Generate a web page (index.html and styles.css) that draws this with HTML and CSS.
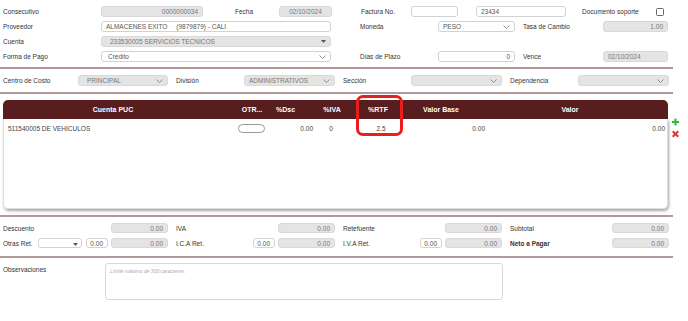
FILE: index.html
```html
<!DOCTYPE html>
<html lang="es">
<head>
  <meta charset="UTF-8" />
  <meta name="viewport" content="width=device-width, initial-scale=1" />
  <title>Factura de Compra</title>
  <link rel="stylesheet" href="styles.css">
</head>
<body>
  <div class="top">
    <div class="row">
      <span class="lbl w98">Consecutivo</span>
      <div class="field ro num w102">0000000034</div>
      <span class="lbl w44 ml32">Fecha</span>
      <div class="field ro mid w53">02/10/2024</div>
      <span class="lbl w50 ml29">Factura No.</span>
      <div class="field w47"></div>
      <div class="field w90 ml18">23434</div>
      <span class="lbl w73 ml16">Documento soporte</span>
      <span class="check"></span>
    </div>

    <div class="row">
      <span class="lbl w98">Proveedor</span>
      <div class="field w230">ALMACENES EXITO     (9879879) - CALI</div>
      <span class="lbl w78 ml29">Moneda</span>
      <div class="field sel w77">PESO<svg class="chev" viewBox="0 0 7 4"><path d="M0.5 0.5 3.5 3.5 6.5 0.5"/></svg></div>
      <span class="lbl w80 ml8">Tasa de Cambio</span>
      <div class="field ro num w65">1.00</div>
    </div>

    <div class="row">
      <span class="lbl w98">Cuenta</span>
      <div class="field ro sel pad8 w230">233530005 SERVICIOS TECNICOS<svg class="tri" viewBox="0 0 5 3"><path d="M0 0h5L2.5 3z"/></svg></div>
    </div>

    <div class="row">
      <span class="lbl w98">Forma de Pago</span>
      <div class="field sel pad6 w230">Credito<svg class="chev" viewBox="0 0 7 4"><path d="M0.5 0.5 3.5 3.5 6.5 0.5"/></svg></div>
      <span class="lbl w78 ml29">Días de Plazo</span>
      <div class="field num w77">0</div>
      <span class="lbl w80 ml8">Vence</span>
      <div class="field ro w65">02/10/2024</div>
    </div>
  </div>

  <div class="rule"></div>

  <div class="filters">
    <div class="cell">
      <span class="lbl">Centro de Costo</span>
      <div class="field ro sel pad8 w90">PRINCIPAL<svg class="chev" viewBox="0 0 7 4"><path d="M0.5 0.5 3.5 3.5 6.5 0.5"/></svg></div>
    </div>
    <div class="cell">
      <span class="lbl">División</span>
      <div class="field ro sel w91">ADMINISTRATIVOS<svg class="chev" viewBox="0 0 7 4"><path d="M0.5 0.5 3.5 3.5 6.5 0.5"/></svg></div>
    </div>
    <div class="cell">
      <span class="lbl">Sección</span>
      <div class="field ro sel w91"><span></span><svg class="chev" viewBox="0 0 7 4"><path d="M0.5 0.5 3.5 3.5 6.5 0.5"/></svg></div>
    </div>
    <div class="cell">
      <span class="lbl">Dependencia</span>
      <div class="field ro sel w91"><span></span><svg class="chev" viewBox="0 0 7 4"><path d="M0.5 0.5 3.5 3.5 6.5 0.5"/></svg></div>
    </div>
  </div>

  <div class="rule flush"></div>

  <div class="lines">
    <div class="table">
      <div class="thead">
        <div class="th c-cta">Cuenta PUC</div>
        <div class="th c-otr">OTR...</div>
        <div class="th c-dsc">%Dsc</div>
        <div class="th c-iva">%IVA</div>
        <div class="th c-rtf">%RTF</div>
        <div class="th c-base">Valor Base</div>
        <div class="th c-val">Valor</div>
      </div>
      <div class="tbody">
        <div class="tr">
          <div class="td c-cta">511540005 DE VEHICULOS</div>
          <div class="td c-otr"><span class="pill"></span></div>
          <div class="td c-dsc">0.00</div>
          <div class="td c-iva">0</div>
          <div class="td c-rtf">2.5</div>
          <div class="td c-base">0.00</div>
          <div class="td c-val">0.00</div>
        </div>
      </div>
      <!-- resaltado de la columna %RTF -->
      <div class="mark"></div>
    </div>
    <div class="tools">
      <svg class="add" viewBox="0 0 10 10"><path d="M5 0.5v9M0.5 5h9"/></svg>
      <svg class="del" viewBox="0 0 10 10"><path d="M1.5 1.5l7 7M8.5 1.5l-7 7"/></svg>
    </div>
  </div>

  <div class="rule gap"></div>

  <div class="totals">
    <div class="cell">
      <span class="lbl">Descuento</span>
      <div class="field ro num amt">0.00</div>
    </div>
    <div class="cell">
      <span class="lbl">IVA</span>
      <div class="field ro num amt">0.00</div>
    </div>
    <div class="cell">
      <span class="lbl">Retefuente</span>
      <div class="field ro num amt">0.00</div>
    </div>
    <div class="cell">
      <span class="lbl">Subtotal</span>
      <div class="field ro num amt">0.00</div>
    </div>

    <div class="cell">
      <span class="lbl">Otras Ret.</span>
      <div class="field sel pick"><span></span><svg class="tri" viewBox="0 0 5 3"><path d="M0 0h5L2.5 3z"/></svg></div>
      <div class="field num mini">0.00</div>
      <div class="field ro num amt">0.00</div>
    </div>
    <div class="cell">
      <span class="lbl">I.C.A Ret.</span>
      <div class="field num mini">0.00</div>
      <div class="field ro num amt">0.00</div>
    </div>
    <div class="cell">
      <span class="lbl">I.V.A Ret.</span>
      <div class="field num mini">0.00</div>
      <div class="field ro num amt">0.00</div>
    </div>
    <div class="cell">
      <span class="lbl strong">Neto a Pagar</span>
      <div class="field ro num amt">0.00</div>
    </div>
  </div>

  <div class="rule gap"></div>

  <div class="notes">
    <label class="lbl" for="obs">Observaciones</label>
    <textarea id="obs" placeholder="Límite máximo de 300 caracteres."></textarea>
  </div>
</body>
</html>
```

FILE: styles.css
```css
body {
  font-family: 'Liberation Sans', Arial, Helvetica, sans-serif;
  font-size: 6.5px;
  color: #333;
  background: #fff;
  margin: 0;
}

.top {
  padding: 4px 0 0 3px;
}

.row {
  display: flex;
  align-items: center;
  height: 15px;
}

.lbl {
  flex: none;
  white-space: nowrap;
}

.strong {
  font-weight: bold;
}

.field {
  flex: none;
  display: flex;
  align-items: center;
  height: 11px;
  box-sizing: border-box;
  padding: 0 4px;
  border: 1px solid #d2d2d2;
  border-radius: 3px;
  background: #fff;
  color: #555;
  white-space: pre;
  overflow: hidden;
}

.ro {
  background: #e4e4e4;
  border-color: #d8d8d8;
  color: #777;
}

.num {
  justify-content: flex-end;
}

.mid {
  justify-content: center;
}

.sel {
  justify-content: space-between;
}

.pad6 { padding-left: 6px; }
.pad8 { padding-left: 8px; }

.chev {
  width: 7px;
  height: 4px;
  fill: none;
  stroke: #777;
  stroke-width: 0.8;
}

.tri {
  width: 5px;
  height: 3px;
  fill: #555;
}

.check {
  width: 8px;
  height: 8px;
  box-sizing: border-box;
  border: 1px solid #666;
  border-radius: 1.5px;
  margin-left: 1px;
}

/* widths */
.w44 { width: 44px; }
.w47 { width: 47px; }
.w50 { width: 50px; }
.w53 { width: 53px; }
.w65 { width: 65px; }
.w73 { width: 73px; }
.w77 { width: 77px; }
.w78 { width: 78px; }
.w80 { width: 80px; }
.w90 { width: 90px; }
.w91 { width: 91px; }
.w98 { width: 98px; }
.w102 { width: 102px; }
.w230 { width: 230px; }

.ml8 { margin-left: 8px; }
.ml16 { margin-left: 16px; }
.ml18 { margin-left: 18px; }
.ml29 { margin-left: 29px; }
.ml32 { margin-left: 32px; }

.rule {
  width: 673px;
  height: 2px;
  background: #b59797;
  margin-top: 3px;
}

.rule.flush {
  margin-top: 0;
}

.rule.gap {
  margin-top: 6px;
}

.filters,
.totals {
  display: grid;
  grid-template-columns: 165px 159px 159px 159px;
  column-gap: 8px;
  padding-left: 3px;
}

.filters {
  height: 23px;
  align-items: center;
}

.cell {
  display: flex;
  align-items: center;
}

.cell .lbl {
  flex: 1;
}

/* detail table */
.lines {
  display: flex;
  margin: 6px 0 0 3px;
}

.table {
  position: relative;
  width: 665px;
}

.thead,
.tr {
  display: grid;
  grid-template-columns: 220px 49px 44px 36px 52px 84px 180px;
}

.thead {
  height: 19px;
  align-items: center;
  background: #581d1f;
  border-radius: 5px 5px 0 0;
  color: #fff;
  font-size: 7px;
  font-weight: bold;
}

.th { text-align: center; }
.th.c-otr { padding-left: 9px; }
.th.c-dsc { text-align: left; padding-left: 4px; }
.th.c-iva { padding-right: 4px; }
.th.c-base { padding-right: 10px; }
.th.c-val { padding-right: 16px; }

.tbody {
  height: 90px;
  box-sizing: border-box;
  border: 1px solid #ddd;
  border-top: none;
  border-radius: 0 0 5px 5px;
  box-shadow: 1px 2px 3px rgba(0, 0, 0, 0.35);
}

.tr {
  height: 18px;
  align-items: center;
  color: #444;
}

.td { text-align: right; padding-right: 4px; }
.td.c-cta { text-align: left; padding-left: 4px; }
.td.c-otr { display: flex; justify-content: center; padding: 0 0 0 6px; }
.td.c-iva { text-align: center; padding-right: 8px; }
.td.c-rtf { text-align: center; padding: 0 0 0 4px; }

.pill {
  width: 27px;
  height: 9px;
  box-sizing: border-box;
  border: 1px solid #999;
  border-radius: 5px;
}

.mark {
  position: absolute;
  left: 353px;
  top: -5px;
  width: 47px;
  height: 41px;
  box-sizing: border-box;
  border: 3px solid #e8201c;
  border-radius: 7px;
}

.tools {
  display: flex;
  flex-direction: column;
  gap: 4px;
  padding: 18px 0 0 3px;
}

.tools svg {
  width: 9px;
  height: 8px;
  fill: none;
}

.add {
  stroke: #3db43c;
  stroke-width: 2.6;
}

.del {
  stroke: #e2312d;
  stroke-width: 2.4;
}

/* totals */
.totals {
  padding-top: 4px;
  grid-auto-rows: 14px;
  row-gap: 1px;
}

.totals .field {
  height: 10px;
}

.amt {
  width: 57px;
  margin-left: 3px;
}

.mini {
  width: 22px;
}

.pick {
  width: 44px;
  margin-right: 4px;
  padding-right: 3px;
}

.pick .tri {
  margin-top: 3px;
}

/* observaciones */
.notes {
  display: flex;
  padding: 5px 0 0 3px;
}

.notes .lbl {
  width: 102px;
  padding-top: 3px;
}

textarea {
  width: 398px;
  height: 37px;
  box-sizing: border-box;
  margin: 0;
  padding: 4px;
  border: 1px solid #d8d8d8;
  border-radius: 3px;
  resize: none;
  font-family: 'Liberation Sans', Arial, sans-serif;
  font-size: 5px;
}

textarea::placeholder {
  color: #aaa;
  font-style: italic;
}
```
